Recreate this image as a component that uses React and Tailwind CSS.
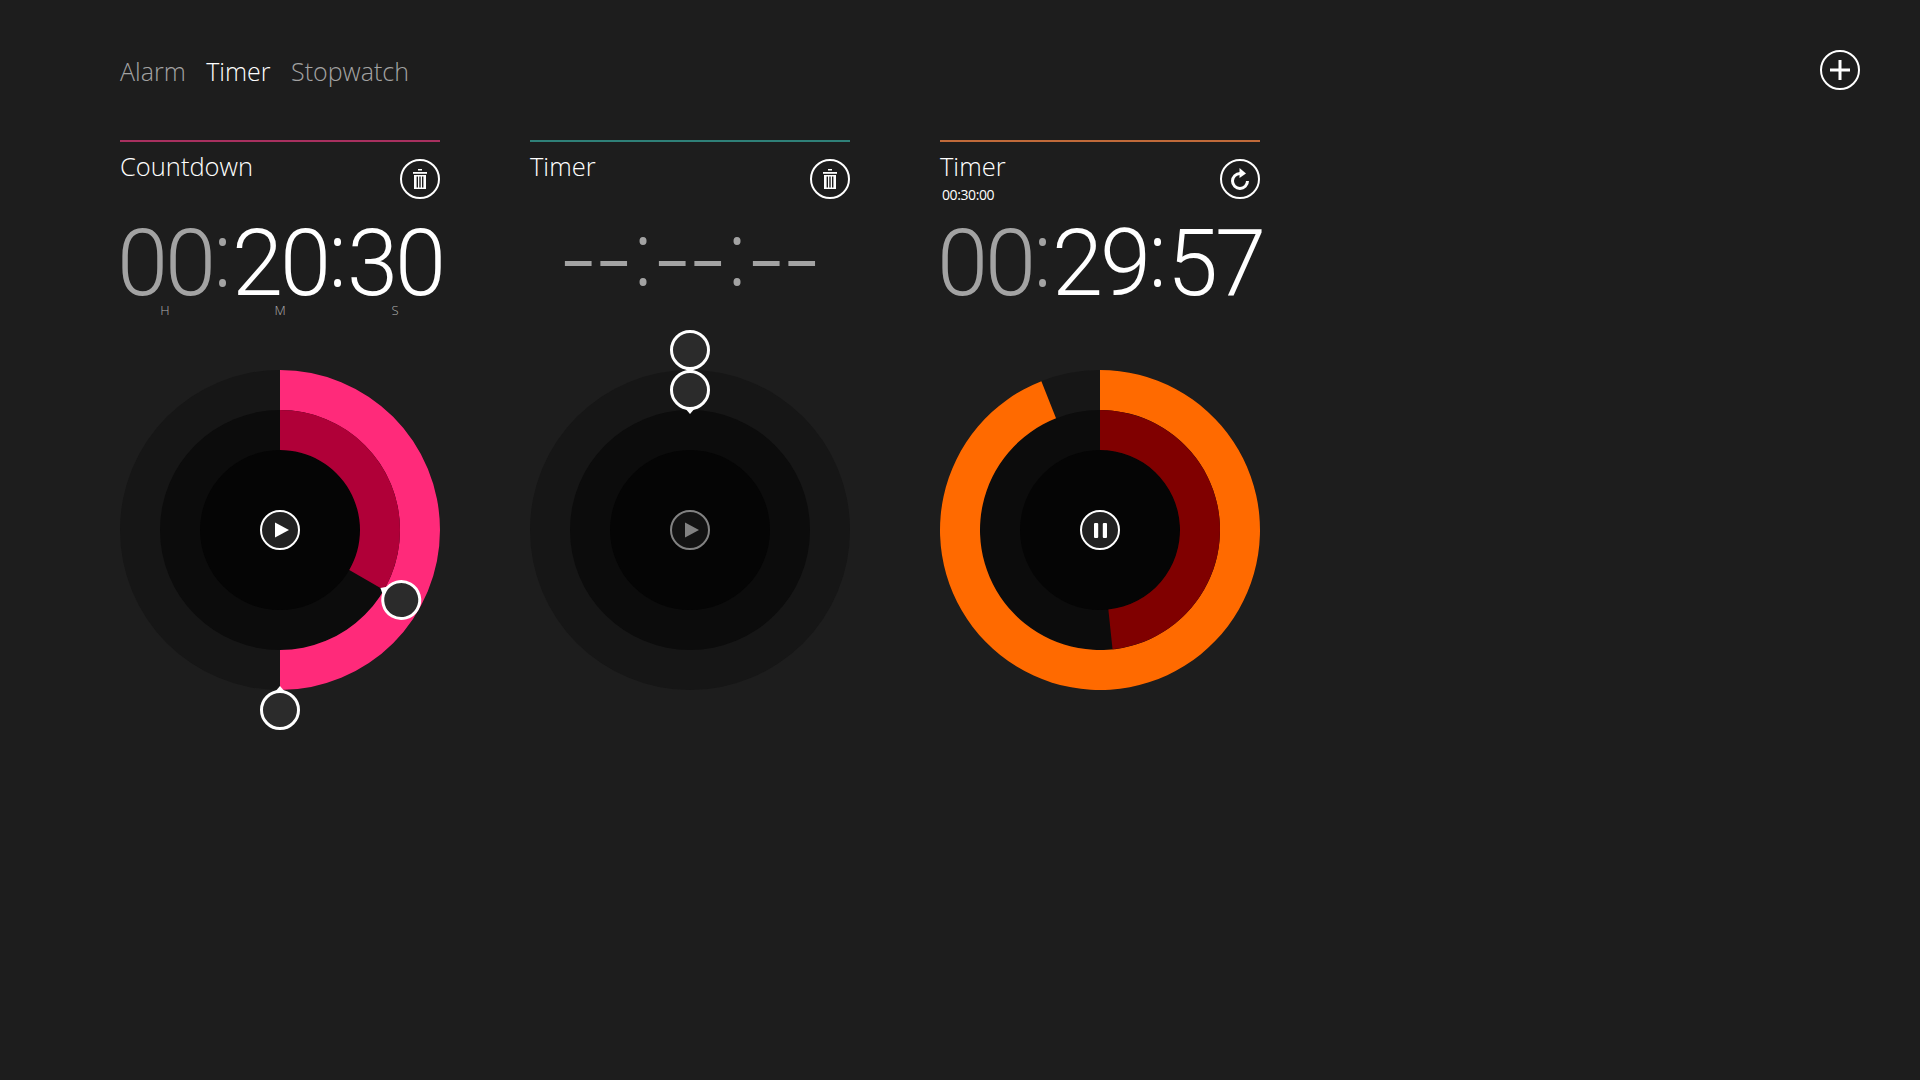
const FONT = 'font-["Open_Sans","Noto_Sans",sans-serif]';

const CX = 160;
const CY = 160;

// annulus segment, angles clockwise from 12 o'clock
const arcPath = (r1, r2, deg) => {
  const a = (deg * Math.PI) / 180;
  const pt = (r) => `${CX + r * Math.sin(a)} ${CY - r * Math.cos(a)}`;
  const large = deg > 180 ? 1 : 0;
  return `M${CX} ${CY - r2} A${r2} ${r2} 0 ${large} 1 ${pt(r2)} L${pt(r1)} A${r1} ${r1} 0 ${large} 0 ${CX} ${CY - r1} Z`;
};

const Handle = ({ radius, deg }) => (
  <g transform={`rotate(${deg} ${CX} ${CY})`}>
    <polygon points={`${CX - 6} ${CY - radius + 17} ${CX + 6} ${CY - radius + 17} ${CX} ${CY - radius + 24}`} fill="#ffffff" />
    <circle cx={CX} cy={CY - radius} r="18.5" fill="#2b2b2b" stroke="#ffffff" strokeWidth="3" />
  </g>
);

const Dial = ({ outer, inner, outerDeg, innerDeg, handles = [], children }) => (
  <div className="relative w-[320px] h-[320px]">
    <svg width="320" height="320" viewBox="0 0 320 320" className="block overflow-visible">
      <circle cx={CX} cy={CY} r="160" fill="#161616" />
      <circle cx={CX} cy={CY} r="120" fill="#0c0c0c" />
      <circle cx={CX} cy={CY} r="80" fill="#050505" />
      {outer && <path d={arcPath(120, 160, outerDeg)} fill={outer} />}
      {inner && <path d={arcPath(80, 120, innerDeg)} fill={inner} />}
      {handles.map((h) => <Handle key={h.radius} {...h} />)}
    </svg>
    <div className="absolute inset-0 flex items-center justify-center">{children}</div>
  </div>
);

const RoundButton = ({ children, className = '' }) => (
  <button className={`w-10 h-10 rounded-full border-2 border-white flex items-center justify-center shrink-0 ${className}`}>
    {children}
  </button>
);

const TrashIcon = () => (
  <svg width="14" height="20" viewBox="0 0 14 20">
    <rect x="5" y="0" width="4" height="1.5" fill="#fff" />
    <rect x="0" y="3" width="14" height="1.8" fill="#fff" />
    <rect x="1" y="6" width="12" height="14" fill="#fff" />
    <rect x="3.6" y="7.5" width="1.4" height="11" fill="#1d1d1d" />
    <rect x="6.3" y="7.5" width="1.4" height="11" fill="#1d1d1d" />
    <rect x="9" y="7.5" width="1.4" height="11" fill="#1d1d1d" />
  </svg>
);

const RefreshIcon = () => (
  <svg width="22" height="24" viewBox="0 0 22 24">
    <path d="M11 6.5 A7.5 7.5 0 1 0 18.5 14" fill="none" stroke="#fff" strokeWidth="3" />
    <polygon points="10.5,1 17,6.5 10.5,11" fill="#fff" />
  </svg>
);

const PlusIcon = () => (
  <svg width="20" height="20" viewBox="0 0 20 20">
    <rect x="0" y="8.5" width="20" height="3" fill="#fff" />
    <rect x="8.5" y="0" width="3" height="20" fill="#fff" />
  </svg>
);

const PlayIcon = () => (
  <svg width="16" height="16" viewBox="0 0 16 16" className="ml-[3px]">
    <polygon points="1,0.5 15,8 1,15.5" fill="#fff" />
  </svg>
);

const PauseIcon = () => (
  <svg width="13" height="15" viewBox="0 0 13 15">
    <rect x="0" y="0" width="4.2" height="15" rx="1" fill="#fff" />
    <rect x="8.8" y="0" width="4.2" height="15" rx="1" fill="#fff" />
  </svg>
);

const Digits = ({ children, dim }) => (
  <span className={`w-[90px] flex justify-center font-["Roboto",sans-serif] text-[92px] leading-[70px] font-light tracking-[-3px] ${dim ? 'text-[#a3a3a3]' : 'text-white'}`}>{children}</span>
);

const Colon = ({ dim }) => (
  <span className={`w-[25px] text-center text-[88px] leading-[70px] font-light -translate-y-[12px] ${dim ? 'text-[#a3a3a3]' : 'text-white'}`}>:</span>
);

const Clock = ({ h, m, s, labels }) => (
  <div>
    <div className="flex h-[84px] items-center pt-[8px]">
      <Digits dim>{h}</Digits>
      <Colon dim />
      <Digits>{m}</Digits>
      <Colon />
      <Digits>{s}</Digits>
    </div>
    {labels && (
      <div className="flex text-[13px] leading-4 font-light text-[#b0b0b0]">
        <span className="w-[90px] text-center">H</span>
        <span className="w-[25px]" />
        <span className="w-[90px] text-center">M</span>
        <span className="w-[25px]" />
        <span className="w-[90px] text-center">S</span>
      </div>
    )}
  </div>
);

const Dashes = () => (
  <span className="w-[94px] text-center text-[110px] leading-[90px] -translate-y-[13px]">--</span>
);

const DimColon = () => (
  <span className="w-[0px] flex justify-center text-[88px] leading-[90px] -translate-y-[12px]">:</span>
);

const EmptyClock = () => (
  <div className="flex h-[90px] items-center justify-center text-[#a3a3a3] font-light">
    <Dashes />
    <DimColon />
    <Dashes />
    <DimColon />
    <Dashes />
  </div>
);

const Column = ({ color, title, sub, action, clock, dial }) => (
  <section className="w-[320px]">
    <div className="h-[2px]" style={{ background: color }} />
    <div className="h-[76px] flex justify-between">
      <div className="pt-[6px]">
        <div className="text-[25.5px] leading-9 font-light text-white">{title}</div>
        {sub && <div className="text-[14px] leading-4 text-white font-normal ml-[2px] mt-[3px] tracking-[-0.4px]">{sub}</div>}
      </div>
      <div className="pt-[17px]">{action}</div>
    </div>
    <div className="h-[152px]">{clock}</div>
    {dial}
  </section>
);

export default function App() {
  return (
    <div className={`min-h-screen bg-[#1d1d1d] ${FONT} overflow-hidden`}>
      <header className="flex justify-between pl-[120px] pr-[60px] pt-[50px] h-[140px]">
        <nav className="flex gap-[20.5px] text-[25px] leading-10 font-light text-[#a3a3a3] pt-[1px]">
          <a>Alarm</a>
          <a className="text-white">Timer</a>
          <a>Stopwatch</a>
        </nav>
        <RoundButton><PlusIcon /></RoundButton>
      </header>
      <main className="flex gap-[90px] pl-[120px]">
        <Column
          color="#a8305f"
          title="Countdown"
          action={<RoundButton><TrashIcon /></RoundButton>}
          clock={<Clock h="00" m="20" s="30" labels />}
          dial={
            <Dial outer="#ff2a7a" inner="#b00038" outerDeg={180} innerDeg={120}
              handles={[{ radius: 180, deg: 180 }, { radius: 140, deg: 120 }]}>
              <RoundButton className="bg-[#222222]"><PlayIcon /></RoundButton>
            </Dial>
          }
        />
        <Column
          color="#2f8078"
          title="Timer"
          action={<RoundButton><TrashIcon /></RoundButton>}
          clock={<EmptyClock />}
          dial={
            <Dial handles={[{ radius: 180, deg: 0 }, { radius: 140, deg: 0 }]}>
              <RoundButton className="bg-[#222222] opacity-50"><PlayIcon /></RoundButton>
            </Dial>
          }
        />
        <Column
          color="#c06a3a"
          title="Timer"
          sub="00:30:00"
          action={<RoundButton><RefreshIcon /></RoundButton>}
          clock={<Clock h="00" m="29" s="57" />}
          dial={
            <Dial outer="#ff6a00" inner="#800000" outerDeg={338.5} innerDeg={174}>
              <RoundButton className="bg-[#222222]"><PauseIcon /></RoundButton>
            </Dial>
          }
        />
      </main>
    </div>
  );
}
